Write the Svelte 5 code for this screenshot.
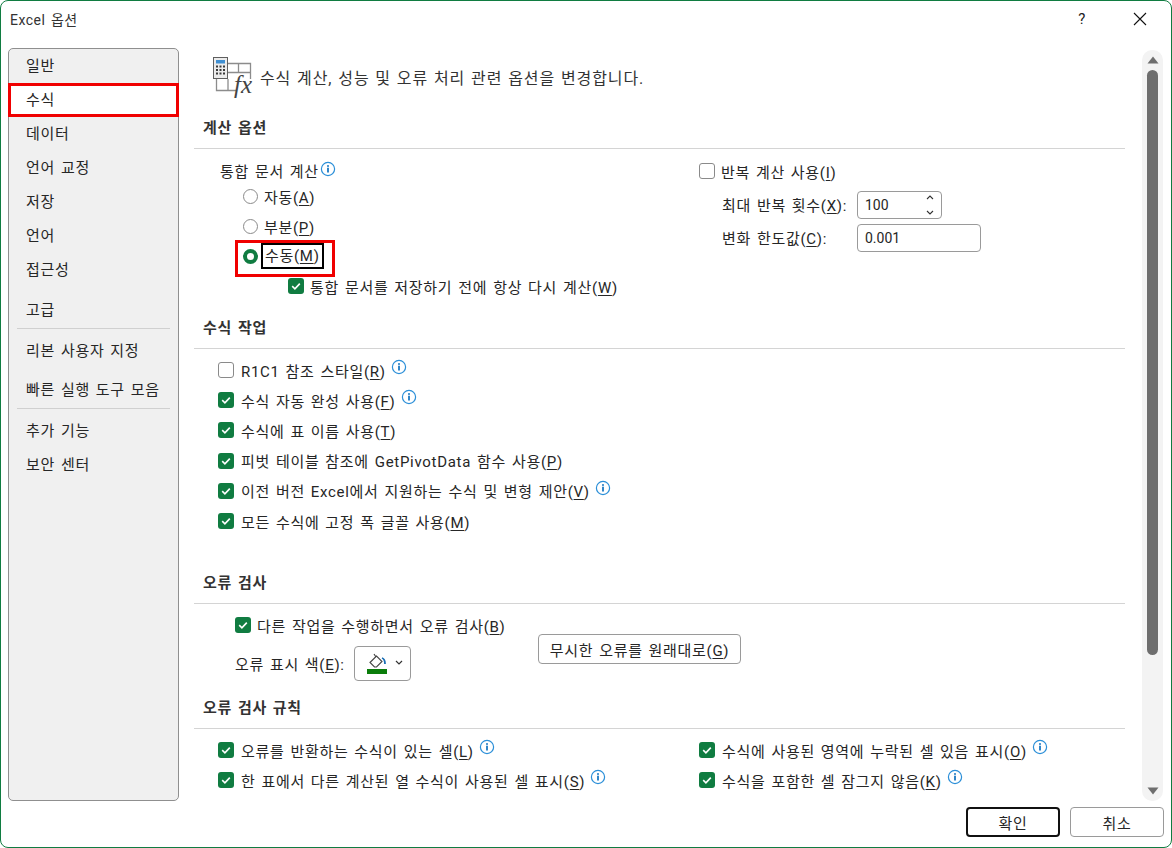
<script>
    const menu = [
        { label: "일반", cls: "" },
        { label: "수식", cls: "active" },
        { label: "데이터", cls: "" },
        { label: "언어 교정", cls: "" },
        { label: "저장", cls: "" },
        { label: "언어", cls: "" },
        { label: "접근성", cls: "" },
        { label: "고급", cls: "gap sep" },
        { label: "리본 사용자 지정", cls: "gap1" },
        { label: "빠른 실행 도구 모음", cls: "gap2 sep" },
        { label: "추가 기능", cls: "gap3" },
        { label: "보안 센터", cls: "" },
    ];

    const formulaRows = [
        { on: false, text: "R1C1 참조 스타일(", key: "R", info: true },
        { on: true, text: "수식 자동 완성 사용(", key: "F", info: true },
        { on: true, text: "수식에 표 이름 사용(", key: "T", info: false },
        { on: true, text: "피벗 테이블 참조에 GetPivotData 함수 사용(", key: "P", info: false },
        { on: true, text: "이전 버전 Excel에서 지원하는 수식 및 변형 제안(", key: "V", info: true },
        { on: true, text: "모든 수식에 고정 폭 글꼴 사용(", key: "M", info: false },
    ];

    const ruleRows = [
        [
            { on: true, text: "오류를 반환하는 수식이 있는 셀(", key: "L", info: true },
            { on: true, text: "수식에 사용된 영역에 누락된 셀 있음 표시(", key: "O", info: true },
        ],
        [
            { on: true, text: "한 표에서 다른 계산된 열 수식이 사용된 셀 표시(", key: "S", info: true },
            { on: true, text: "수식을 포함한 셀 잠그지 않음(", key: "K", info: true },
        ],
    ];
</script>

{#snippet info()}
    <svg class="info" width="16" height="16" viewBox="0 0 16 16">
        <circle cx="8" cy="8" r="6.6" fill="none" stroke="#2b8fd8" stroke-width="1.2" />
        <circle cx="8" cy="4.9" r="1" fill="#1a78c2" />
        <rect x="7.1" y="6.7" width="1.8" height="4.8" fill="#1a78c2" />
    </svg>
{/snippet}

{#snippet check(on)}
    <span class="check" class:on>
        {#if on}
            <svg width="16" height="16" viewBox="0 0 16 16">
                <path d="M4.2 8.2 L6.9 10.8 L11.8 5.6" fill="none" stroke="#fff" stroke-width="1.6" />
            </svg>
        {/if}
    </span>
{/snippet}

{#snippet checkRow(row)}
    <div class="row">
        {@render check(row.on)}
        <span class="label">{row.text}<u>{row.key}</u>)</span>
        {#if row.info}{@render info()}{/if}
    </div>
{/snippet}

<div class="window">
    <div class="titlebar">
        <span class="title">Excel 옵션</span>
        <span class="help">?</span>
        <svg class="close" width="14" height="14" viewBox="0 0 14 14">
            <path d="M1 1 L13 13 M13 1 L1 13" stroke="#111" stroke-width="1.1" fill="none" />
        </svg>
    </div>

    <div class="body">
        <nav class="sidebar">
            {#each menu as item}
                <div class="item {item.cls}">{item.label}</div>
            {/each}
        </nav>

        <main class="content">
            <div class="intro">
                <svg class="intro-icon" width="44" height="44" viewBox="0 0 44 44">
                    <path d="M15 8.5 H37.5 V24 M15 17.5 H37.5 M25.5 8.5 V17.5 M3.5 24 V35.5 H24 M15 24 V35" fill="none" stroke="#8c8c8c" stroke-width="1.3" />
                    <rect x="0.5" y="2.5" width="14" height="21" fill="#ececec" stroke="#5f5f5f" />
                    <rect x="3" y="5" width="9" height="3.5" fill="#3f8fd2" />
                    <path d="M3 11.5 H12 M3 15 H12 M3 18.5 H12" stroke="#3a3a3a" stroke-width="2" stroke-dasharray="2 1.5" />
                    <text x="21" y="38" class="fx">fx</text>
                </svg>
                <span>수식 계산, 성능 및 오류 처리 관련 옵션을 변경합니다.</span>
            </div>

            <h3 class="first">계산 옵션</h3>
            <div class="calc">
                <div class="calc-left">
                    <div class="row workbook">
                        <span class="label">통합 문서 계산</span>{@render info()}
                    </div>
                    <div class="row radio-row">
                        <span class="radio"></span>
                        <span class="label">자동(<u>A</u>)</span>
                    </div>
                    <div class="row radio-row">
                        <span class="radio"></span>
                        <span class="label">부분(<u>P</u>)</span>
                    </div>
                    <div class="row radio-row manual">
                        <span class="radio on"></span>
                        <span class="label focus">수동(<u>M</u>)</span>
                        <span class="mark"></span>
                    </div>
                    <div class="row recalc">
                        {@render check(true)}
                        <span class="label">통합 문서를 저장하기 전에 항상 다시 계산(<u>W</u>)</span>
                    </div>
                </div>
                <div class="calc-right">
                    <div class="row iterate">
                        {@render check(false)}
                        <span class="label">반복 계산 사용(<u>I</u>)</span>
                    </div>
                    <div class="row field">
                        <span class="label field-label">최대 반복 횟수(<u>X</u>):</span>
                        <div class="input spin">
                            100
                            <svg width="8" height="22" viewBox="0 0 8 22">
                                <path d="M1 5 L4 2 L7 5 M1 17 L4 20 L7 17" fill="none" stroke="#333" stroke-width="1.1" />
                            </svg>
                        </div>
                    </div>
                    <div class="row field">
                        <span class="label field-label">변화 한도값(<u>C</u>):</span>
                        <div class="input wide">0.001</div>
                    </div>
                </div>
            </div>

            <h3 class="formulas">수식 작업</h3>
            <div class="list">
                {#each formulaRows as row}
                    {@render checkRow(row)}
                {/each}
            </div>

            <h3 class="errors">오류 검사</h3>
            <div class="error-check">
                <div class="error-left">
                    <div class="row">
                        {@render check(true)}
                        <span class="label">다른 작업을 수행하면서 오류 검사(<u>B</u>)</span>
                    </div>
                    <div class="row colour">
                        <span class="label">오류 표시 색(<u>E</u>):</span>
                        <div class="colour-btn">
                            <svg width="24" height="24" viewBox="0 0 24 24">
                                <path d="M5 11.5 L11.5 5 L17 10.5 L11.5 16 L9.5 16 Z" fill="#fff" stroke="#444" stroke-width="1.1" />
                                <path d="M9 3 L11 6" stroke="#444" stroke-width="1.2" />
                                <path d="M17 7 Q20 8 20 13" fill="none" stroke="#1a6fb5" stroke-width="1.8" />
                                <rect x="2" y="18" width="20" height="5" fill="#0a7d0a" />
                            </svg>
                            <svg width="8" height="6" viewBox="0 0 8 6">
                                <path d="M1 1 L4 4 L7 1" fill="none" stroke="#333" stroke-width="1.2" />
                            </svg>
                        </div>
                    </div>
                </div>
                <button class="btn reset">무시한 오류를 원래대로(<u>G</u>)</button>
            </div>

            <h3 class="rules">오류 검사 규칙</h3>
            <div class="rule-grid">
                {#each ruleRows as pair}
                    {#each pair as row}
                        {@render checkRow(row)}
                    {/each}
                {/each}
            </div>
        </main>

        <div class="scrollbar">
            <svg width="12" height="8" viewBox="0 0 12 8"><path d="M6 0.5 L11.5 7.5 H0.5 Z" fill="#6e6e6e" /></svg>
            <div class="thumb-track"><div class="thumb"></div></div>
            <svg width="12" height="8" viewBox="0 0 12 8"><path d="M6 7.5 L11.5 0.5 H0.5 Z" fill="#6e6e6e" /></svg>
        </div>
    </div>

    <div class="footer">
        <button class="btn ok">확인</button>
        <button class="btn cancel">취소</button>
    </div>
</div>

<style>
    :global(body) {
        margin: 0;
        background: #fff;
    }

    .window {
        box-sizing: border-box;
        width: 1172px;
        height: 848px;
        border: 1px solid #107c41;
        border-radius: 8px;
        background: #fff;
        display: flex;
        flex-direction: column;
        overflow: hidden;
        font-family: Roboto, "Noto Sans CJK KR", sans-serif;
        font-size: 15px;
        letter-spacing: 0.7px;
        word-spacing: 1.5px;
        color: #262626;
    }

    .titlebar {
        box-sizing: border-box;
        height: 37px;
        flex-shrink: 0;
        display: flex;
        align-items: center;
        padding: 0 24px 2px 9px;
    }
    .title {
        flex: 1;
        font-size: 14px;
        letter-spacing: 0.5px;
        color: #333;
    }
    .help {
        font-size: 15px;
        margin-right: 47px;
        color: #222;
    }
    .close {
        display: block;
    }

    .body {
        display: flex;
        height: 763px;
        padding-left: 7px;
        padding-top: 10px;
        box-sizing: border-box;
    }

    .sidebar {
        box-sizing: border-box;
        width: 171px;
        flex-shrink: 0;
        background: #f0f0f0;
        border: 1px solid #8f8f8f;
        border-radius: 5px;
    }
    .item {
        height: 34px;
        line-height: 34px;
        padding-left: 17px;
        position: relative;
    }
    .item.active {
        background: #fff;
    }
    .item.active::after {
        content: "";
        position: absolute;
        inset: 0 -1px 0 -1px;
        border: 3px solid #f00000;
    }
    .item.gap {
        margin-top: 6px;
    }
    .item.gap1 {
        margin-top: 7px;
    }
    .item.gap2 {
        margin-top: 5px;
    }
    .item.gap3 {
        margin-top: 7px;
    }
    .item.sep::before {
        content: "";
        position: absolute;
        left: 8px;
        right: 8px;
        bottom: -2px;
        border-bottom: 1px solid #d0d0d0;
    }

    .content {
        flex: 1;
        min-width: 0;
        padding-left: 15px;
        padding-right: 17px;
        overflow: hidden;
    }

    .intro {
        display: flex;
        align-items: center;
        height: 44px;
        margin-top: 7px;
        padding-left: 19px;
        font-size: 16px;
        letter-spacing: 0.9px;
        word-spacing: 1px;
        color: #333;
    }
    .intro-icon {
        margin-right: 3px;
        flex-shrink: 0;
    }
    .fx {
        font-family: "Liberation Serif", serif;
        font-style: italic;
        font-size: 25px;
        letter-spacing: 0;
        fill: #444;
    }

    h3 {
        margin: 0;
        height: 34px;
        line-height: 26px;
        padding-left: 9px;
        font-size: 15px;
        font-weight: 700;
        color: #333;
        border-bottom: 1px solid #d4d4d4;
        box-sizing: border-box;
    }
    h3.first {
        margin-top: 16px;
    }
    h3.formulas {
        margin-top: 2px;
    }
    h3.errors {
        margin-top: 34px;
    }
    h3.rules {
        margin-top: 2px;
    }

    .row {
        display: flex;
        align-items: center;
        height: 30px;
        white-space: nowrap;
    }
    .label {
        margin-left: 6px;
    }
    u {
        text-underline-offset: 2px;
    }

    .info {
        margin-left: 5px;
        margin-top: -6px;
        flex-shrink: 0;
    }

    .check {
        box-sizing: border-box;
        width: 16px;
        height: 16px;
        border: 1px solid #8a8a8a;
        border-radius: 3px;
        background: #fff;
        flex-shrink: 0;
    }
    .check.on {
        background: #107c41;
        border: none;
    }
    .check svg {
        display: block;
    }

    .radio {
        box-sizing: border-box;
        width: 15px;
        height: 15px;
        border: 1px solid #8a8a8a;
        border-radius: 50%;
        flex-shrink: 0;
    }
    .radio.on {
        border: 4px solid #107c41;
    }

    .calc {
        display: flex;
        height: 164px;
    }
    .calc-left {
        width: 505px;
        padding-left: 26px;
        box-sizing: border-box;
        flex-shrink: 0;
    }
    .workbook {
        height: 22px;
        margin-top: 10px;
    }
    .workbook .label {
        margin-left: 0;
    }
    .workbook .info {
        margin-left: 1px;
        margin-top: -2px;
    }
    .radio-row {
        margin-left: 23px;
    }
    .manual {
        position: relative;
    }
    .focus {
        outline: 2px solid #000;
        outline-offset: 0;
        padding: 0 2px;
        margin-left: 5px;
        line-height: 22px;
    }
    .mark {
        position: absolute;
        left: -8px;
        top: -1px;
        width: 100px;
        height: 37px;
        box-sizing: border-box;
        border: 3px solid #f00000;
    }
    .recalc {
        margin-left: 68px;
    }

    .calc-right {
        padding-top: 7px;
    }
    .iterate {
        margin-bottom: 2px;
    }
    .field {
        height: 33px;
        padding-left: 17px;
    }
    .field-label {
        margin-left: 6px;
        width: 135px;
        flex-shrink: 0;
    }
    .input {
        box-sizing: border-box;
        height: 28px;
        border: 1px solid #9a9a9a;
        border-radius: 4px;
        display: flex;
        align-items: center;
        justify-content: space-between;
        padding: 0 7px;
        font-size: 14px;
        letter-spacing: 0;
    }
    .spin {
        width: 85px;
    }
    .wide {
        width: 124px;
    }

    .list {
        padding-top: 6px;
    }
    .list .row {
        padding-left: 24px;
        height: 30.2px;
    }
    .list .label,
    .rule-grid .label {
        margin-left: 7px;
    }

    .error-check {
        display: flex;
        height: 89px;
        padding-left: 41px;
        padding-top: 6px;
        box-sizing: border-box;
    }
    .error-left {
        width: 303px;
        flex-shrink: 0;
    }
    .error-check .label {
        margin-left: 6px;
    }
    .error-check .colour .label {
        margin-left: 0;
        width: 119px;
        flex-shrink: 0;
    }
    .colour {
        height: 40px;
        margin-top: 3px;
    }
    .colour-btn {
        box-sizing: border-box;
        width: 57px;
        height: 35px;
        border: 1px solid #9a9a9a;
        border-radius: 4px;
        display: flex;
        align-items: center;
        padding-left: 10px;
        gap: 6px;
    }

    .btn {
        box-sizing: border-box;
        background: #fff;
        border: 1px solid #9a9a9a;
        border-radius: 4px;
        font: inherit;
        color: inherit;
        letter-spacing: inherit;
        word-spacing: inherit;
        padding: 0;
    }
    .reset {
        width: 203px;
        height: 30px;
        margin-top: 24px;
        white-space: nowrap;
    }

    .rule-grid {
        display: grid;
        grid-template-columns: 481px 1fr;
        padding-left: 24px;
        padding-top: 6px;
    }

    .scrollbar {
        box-sizing: border-box;
        width: 21px;
        margin-right: 8px;
        margin-top: 2px;
        height: 751px;
        background: #f3f3f3;
        border-radius: 10px;
        display: flex;
        flex-direction: column;
        align-items: center;
        padding: 6px 0;
        flex-shrink: 0;
    }
    .thumb-track {
        flex: 1;
        width: 11px;
        padding-top: 6px;
    }
    .thumb {
        height: 585px;
        background: #6e6e6e;
        border-radius: 6px;
    }

    .footer {
        flex: 1;
        display: flex;
        justify-content: flex-end;
        align-items: flex-start;
        gap: 10px;
        padding: 6px 7px 0 0;
    }
    .ok,
    .cancel {
        width: 94px;
        height: 30px;
    }
    .ok {
        border: 2px solid #111;
    }
</style>
